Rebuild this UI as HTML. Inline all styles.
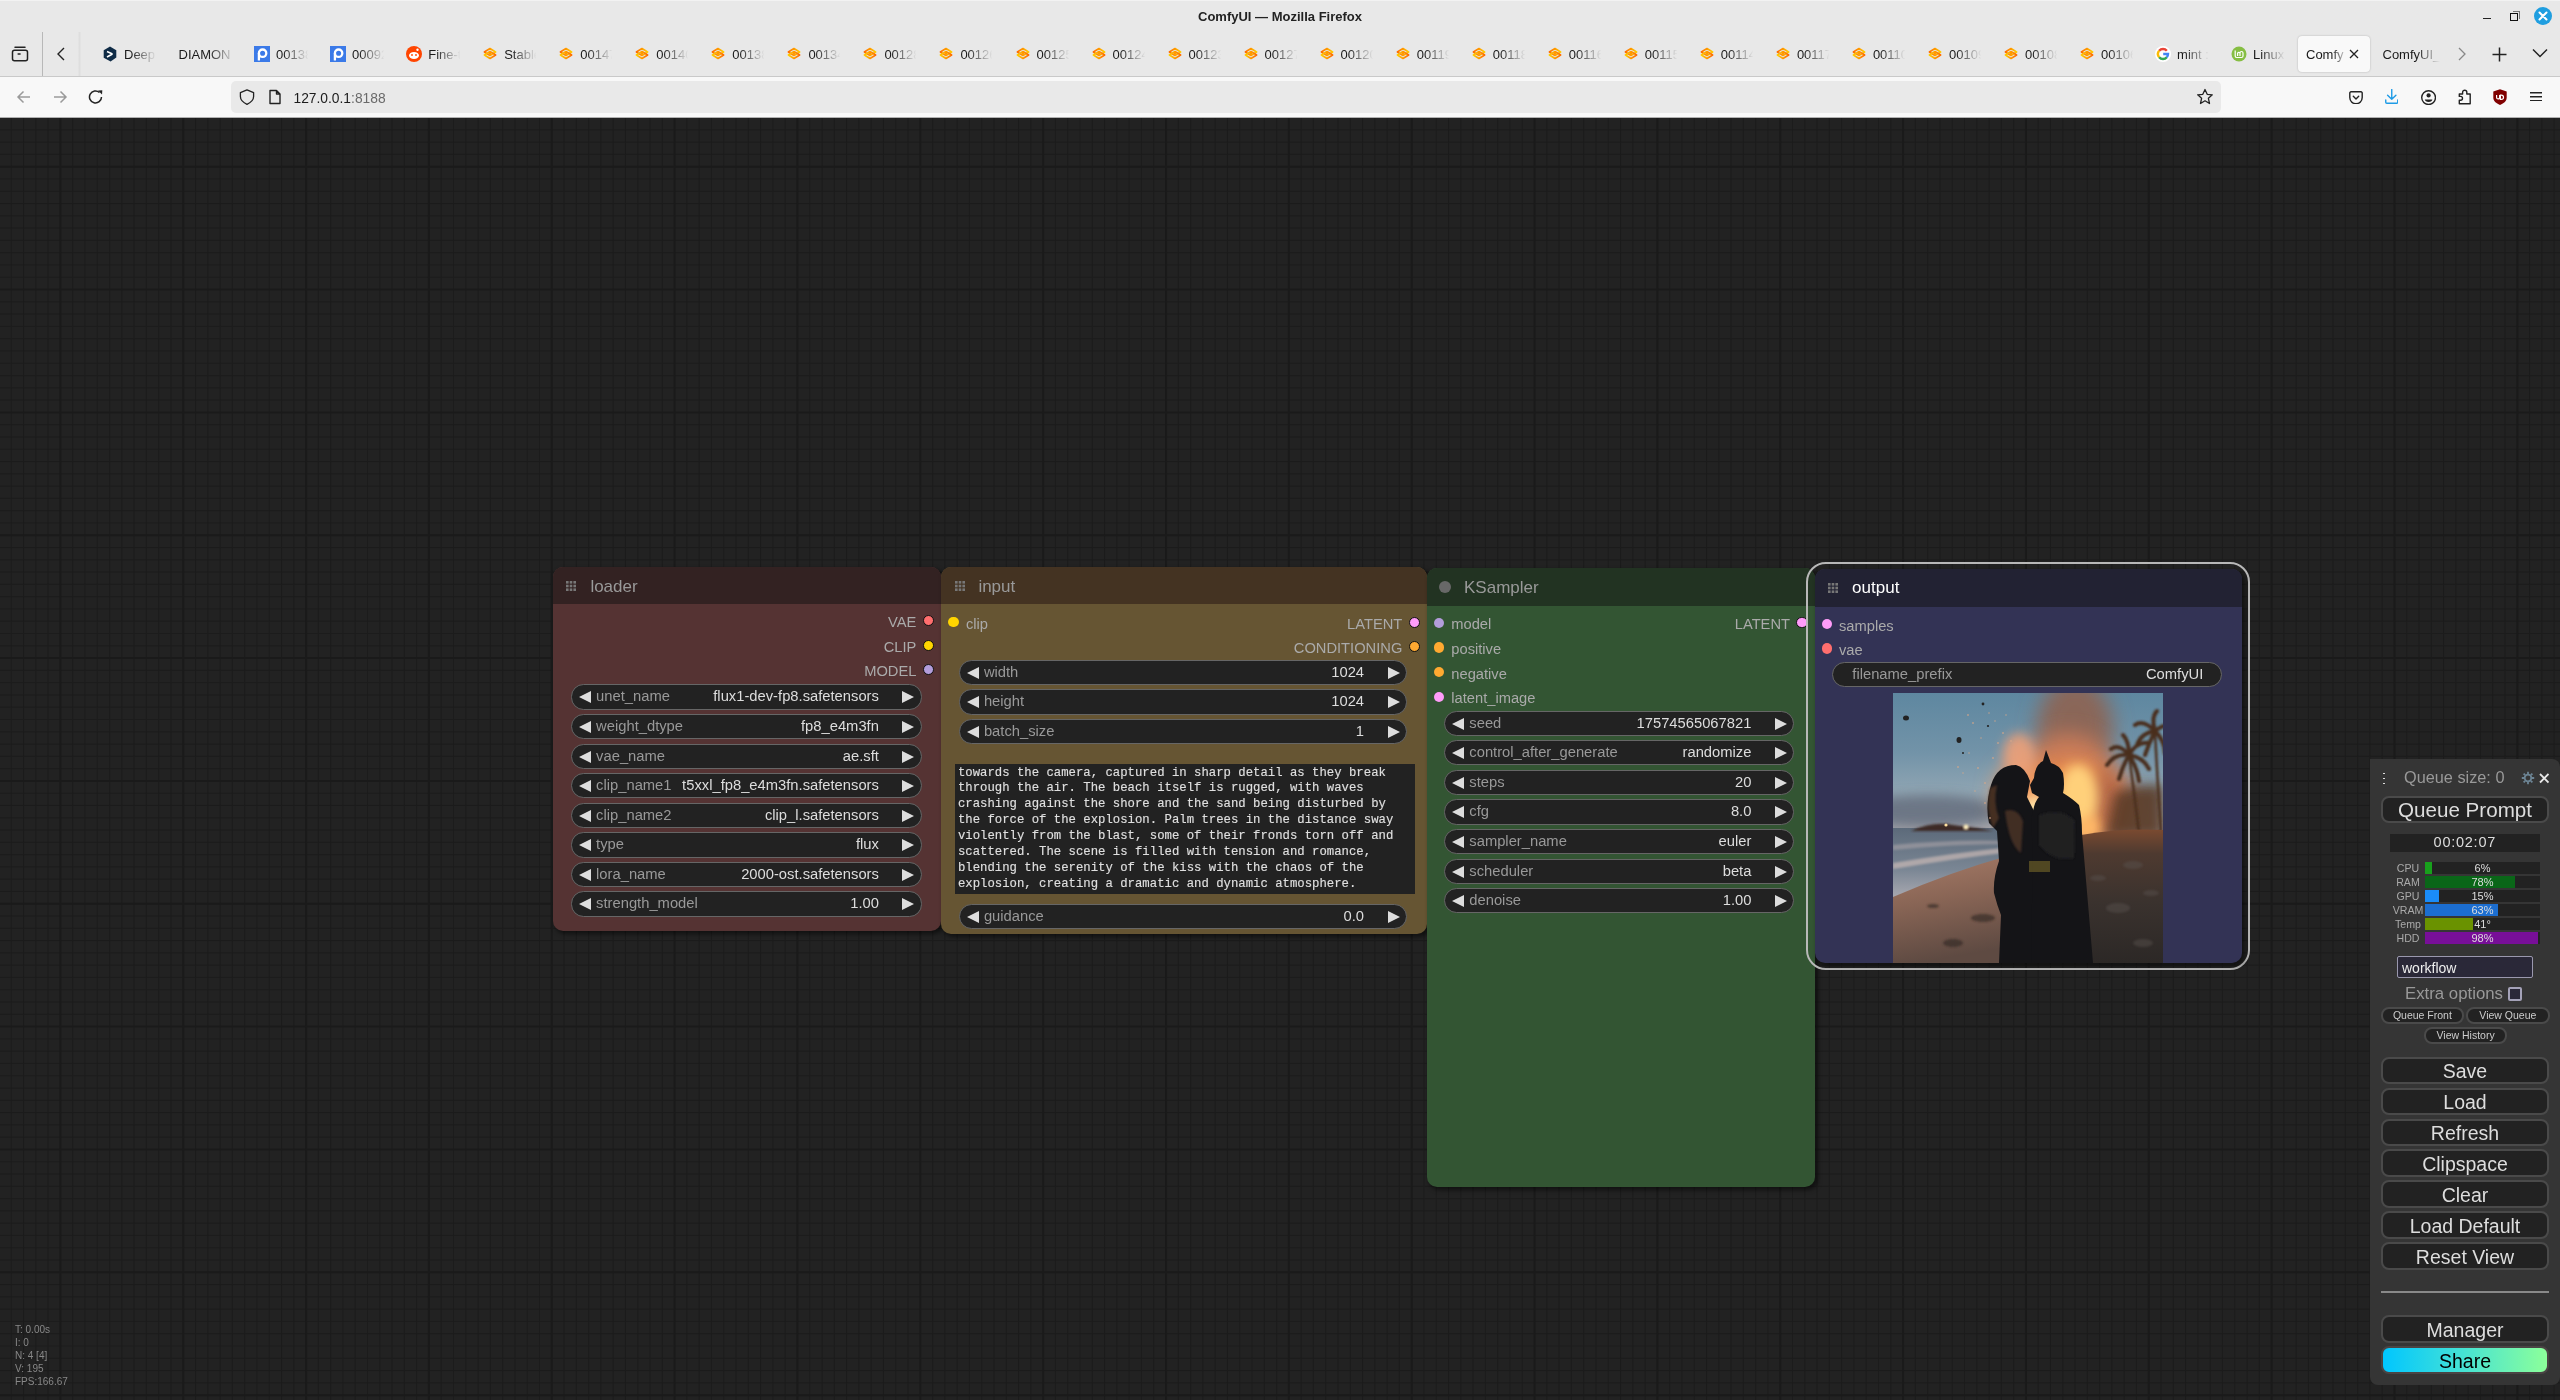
<!DOCTYPE html><html><head><meta charset="utf-8"><title>ComfyUI</title><style>
*{box-sizing:border-box;margin:0;padding:0}
html,body{width:2560px;height:1400px;overflow:hidden;background:#222;font-family:"Liberation Sans",sans-serif}
.abs{position:absolute}
#chrome{position:absolute;left:0;top:0;width:2560px;height:118px;background:#e8e8e8}
#nav{position:absolute;left:0;top:77px;width:2560px;height:41px;background:#f8f8f8}
#canvas{position:absolute;left:0;top:118px;width:2560px;height:1282px;background:#222}
.tab{position:absolute;top:36px;height:36px;width:76px}
.tabtxt{position:absolute;top:0;height:36px;line-height:36px;font-size:13px;color:#1a1a1a;white-space:nowrap;overflow:hidden;padding-top:0.5px;
 -webkit-mask-image:linear-gradient(90deg,#000 0,#000 20%,transparent 90%)}
.node{position:absolute;border-radius:10px;overflow:visible}
.ntitle{position:absolute;left:0;top:0;right:0;border-radius:9px 9px 0 0}
.ntext{position:absolute;font-size:16px;color:#999;white-space:nowrap}
.slot{position:absolute;width:10px;height:10px;border-radius:50%}
.slabel{position:absolute;font-size:14.5px;color:#aaa;white-space:nowrap;line-height:16px}
.w{position:absolute;height:25.4px;background:#222;border:1px solid #666;border-radius:12.5px}
.wl{position:absolute;left:25px;top:0;line-height:23.4px;font-size:14.75px;color:#999;white-space:nowrap}
.wv{position:absolute;right:43px;top:0;line-height:23.4px;font-size:14.75px;color:#ddd;white-space:nowrap;text-align:right}
.tri{position:absolute;top:6.1px;width:0;height:0;border-top:6.25px solid transparent;border-bottom:6.25px solid transparent}
.tl{left:7px;border-right:12.5px solid #ddd}
.tr{right:6.5px;border-left:12.5px solid #ddd}
.btn{position:absolute;left:2381px;width:169px;height:27.5px;background:#222;border:2px solid #4a4a4a;border-radius:8px;color:#ddd;font-size:19.5px;text-align:center;line-height:23px}
.sbtn{position:absolute;height:17px;background:#222;border:2px solid #4a4a4a;border-radius:8px;color:#ccc;font-size:10.5px;text-align:center;line-height:13px}
.rl{position:absolute;left:2386px;width:44px;text-align:center;font-size:10.6px;color:#aaa;line-height:12px}
.bar{position:absolute;left:2425px;width:115px;height:12px;background:#222}
.fill{position:absolute;left:0;top:0;height:12px}
.bt{position:absolute;left:0;top:0;width:115px;text-align:center;font-size:11px;line-height:12px;color:#ddd}
.stat{position:absolute;left:15px;font-size:10px;color:#888;line-height:13px}
</style></head><body><div id="root" style="position:absolute;left:0;top:0;width:2560px;height:1400px;will-change:transform">
<svg width="0" height="0" style="position:absolute"><defs><linearGradient id="sg1" x1="0" x2="1" y1="0" y2="0"><stop offset="0" stop-color="#ff6a00"/><stop offset="1" stop-color="#ffcc00"/></linearGradient><linearGradient id="sg2" x1="0" x2="1" y1="0" y2="0"><stop offset="0" stop-color="#ffcc00"/><stop offset="1" stop-color="#ff6a00"/></linearGradient></defs></svg>
<div id="chrome"></div>
<div class="abs" style="left:0;top:0;width:2560px;height:1px;background:#f2f2f2"></div>
<div class="abs" style="left:0;top:7px;width:2560px;text-align:center;font-size:13px;font-weight:bold;color:#222;line-height:20px">ComfyUI — Mozilla Firefox</div>
<div class="abs" style="left:2483px;top:17.8px;width:8px;height:1.4px;background:#222"></div>
<div class="abs" style="left:2512.5px;top:11.2px;width:7.5px;height:7.5px;border-top:1.5px solid #777;border-right:1.5px solid #777"></div>
<div class="abs" style="left:2510px;top:13.3px;width:8px;height:8px;border:1.6px solid #111;background:#e8e8e8"></div>
<div class="abs" style="left:2533.8px;top:6.8px;width:18.2px;height:18.2px;border-radius:50%;background:#1f9ee0"></div>
<svg class="abs" style="left:2537px;top:10px" width="12" height="12" viewBox="0 0 12 12"><path d="M2.5 2.5L9.5 9.5M9.5 2.5L2.5 9.5" stroke="#fff" stroke-width="2" stroke-linecap="round"/></svg>
<svg class="abs" style="left:11px;top:45px" width="18" height="18" viewBox="0 0 18 18"><rect x="1.5" y="5.3" width="15" height="10.5" rx="2" fill="none" stroke="#222" stroke-width="1.5"/><path d="M4 2.3h10" stroke="#222" stroke-width="1.5" stroke-linecap="round"/><path d="M6.6 9h3" stroke="#222" stroke-width="1.5"/></svg>
<div class="abs" style="left:42px;top:32px;width:1px;height:44px;background:#b8b8b8"></div>
<svg class="abs" style="left:55px;top:47px" width="12" height="14" viewBox="0 0 12 14"><path d="M9 1L3 7L9 13" fill="none" stroke="#222" stroke-width="1.4"/></svg>
<div class="abs" style="left:77.5px;top:32px;width:3px;height:44px;background:linear-gradient(90deg,#e6e6e6,#dedede,#e6e6e6)"></div>
<svg class="abs" style="left:102.0px;top:46px" width="16" height="16" viewBox="0 0 16 16"><path d="M8 0.5L14.3 4.2V11.5L8.6 15.5L1.7 11.8V4.2Z" fill="#0f2b46"/><path d="M5 5.5L10.5 8M5 11L10.5 8" stroke="#fff" stroke-width="1.6"/></svg>
<div class="tabtxt" style="left:124.0px;top:36px;width:36px">Deep</div>
<div class="tabtxt" style="left:178.5px;top:36px;width:58px;-webkit-mask-image:linear-gradient(90deg,#000 0,#000 50%,transparent 98%)">DIAMON</div>
<svg class="abs" style="left:254.10000000000002px;top:46px" width="16" height="16" viewBox="0 0 16 16"><rect x="0" y="0" width="16" height="16" fill="#3b7ae8"/><circle cx="8.6" cy="7.2" r="3.7" fill="none" stroke="#fff" stroke-width="2.3"/><path d="M4.9 7.2V14.5" stroke="#fff" stroke-width="2.3"/><circle cx="8.6" cy="7.2" r="1.2" fill="#3b7ae8"/></svg>
<div class="tabtxt" style="left:276.1px;top:36px;width:36px">00138</div>
<svg class="abs" style="left:330.1px;top:46px" width="16" height="16" viewBox="0 0 16 16"><rect x="0" y="0" width="16" height="16" fill="#3b7ae8"/><circle cx="8.6" cy="7.2" r="3.7" fill="none" stroke="#fff" stroke-width="2.3"/><path d="M4.9 7.2V14.5" stroke="#fff" stroke-width="2.3"/><circle cx="8.6" cy="7.2" r="1.2" fill="#3b7ae8"/></svg>
<div class="tabtxt" style="left:352.1px;top:36px;width:36px">00092</div>
<svg class="abs" style="left:406.2px;top:46px" width="16" height="16" viewBox="0 0 16 16"><circle cx="8" cy="8" r="8" fill="#ff4500"/><ellipse cx="8" cy="9.5" rx="5" ry="3.5" fill="#fff"/><circle cx="6" cy="9" r="0.9" fill="#ff4500"/><circle cx="10" cy="9" r="0.9" fill="#ff4500"/><circle cx="11.5" cy="3.8" r="1.2" fill="#fff"/></svg>
<div class="tabtxt" style="left:428.2px;top:36px;width:36px">Fine-t</div>
<svg class="abs" style="left:482.2px;top:46px" width="16" height="16" viewBox="0 0 16 16"><g transform="translate(8 7.6) scale(0.88) translate(-8 -8)"><path d="M1.6 6.2L8 2.2L14.4 6.2L8 10.2Z" fill="none" stroke="url(#sg1)" stroke-width="1.8" stroke-linejoin="round"/><path d="M1.6 9.6L8 5.6L14.4 9.6L8 13.6Z" fill="none" stroke="url(#sg2)" stroke-width="1.8" stroke-linejoin="round"/><circle cx="8" cy="7.9" r="1.5" fill="#ff9a00"/></g></svg>
<div class="tabtxt" style="left:504.2px;top:36px;width:36px">Stable</div>
<svg class="abs" style="left:558.2px;top:46px" width="16" height="16" viewBox="0 0 16 16"><g transform="translate(8 7.6) scale(0.88) translate(-8 -8)"><path d="M1.6 6.2L8 2.2L14.4 6.2L8 10.2Z" fill="none" stroke="url(#sg1)" stroke-width="1.8" stroke-linejoin="round"/><path d="M1.6 9.6L8 5.6L14.4 9.6L8 13.6Z" fill="none" stroke="url(#sg2)" stroke-width="1.8" stroke-linejoin="round"/><circle cx="8" cy="7.9" r="1.5" fill="#ff9a00"/></g></svg>
<div class="tabtxt" style="left:580.2px;top:36px;width:36px">00147</div>
<svg class="abs" style="left:634.3px;top:46px" width="16" height="16" viewBox="0 0 16 16"><g transform="translate(8 7.6) scale(0.88) translate(-8 -8)"><path d="M1.6 6.2L8 2.2L14.4 6.2L8 10.2Z" fill="none" stroke="url(#sg1)" stroke-width="1.8" stroke-linejoin="round"/><path d="M1.6 9.6L8 5.6L14.4 9.6L8 13.6Z" fill="none" stroke="url(#sg2)" stroke-width="1.8" stroke-linejoin="round"/><circle cx="8" cy="7.9" r="1.5" fill="#ff9a00"/></g></svg>
<div class="tabtxt" style="left:656.3px;top:36px;width:36px">00140</div>
<svg class="abs" style="left:710.3px;top:46px" width="16" height="16" viewBox="0 0 16 16"><g transform="translate(8 7.6) scale(0.88) translate(-8 -8)"><path d="M1.6 6.2L8 2.2L14.4 6.2L8 10.2Z" fill="none" stroke="url(#sg1)" stroke-width="1.8" stroke-linejoin="round"/><path d="M1.6 9.6L8 5.6L14.4 9.6L8 13.6Z" fill="none" stroke="url(#sg2)" stroke-width="1.8" stroke-linejoin="round"/><circle cx="8" cy="7.9" r="1.5" fill="#ff9a00"/></g></svg>
<div class="tabtxt" style="left:732.3px;top:36px;width:36px">00138</div>
<svg class="abs" style="left:786.4px;top:46px" width="16" height="16" viewBox="0 0 16 16"><g transform="translate(8 7.6) scale(0.88) translate(-8 -8)"><path d="M1.6 6.2L8 2.2L14.4 6.2L8 10.2Z" fill="none" stroke="url(#sg1)" stroke-width="1.8" stroke-linejoin="round"/><path d="M1.6 9.6L8 5.6L14.4 9.6L8 13.6Z" fill="none" stroke="url(#sg2)" stroke-width="1.8" stroke-linejoin="round"/><circle cx="8" cy="7.9" r="1.5" fill="#ff9a00"/></g></svg>
<div class="tabtxt" style="left:808.4px;top:36px;width:36px">00134</div>
<svg class="abs" style="left:862.4px;top:46px" width="16" height="16" viewBox="0 0 16 16"><g transform="translate(8 7.6) scale(0.88) translate(-8 -8)"><path d="M1.6 6.2L8 2.2L14.4 6.2L8 10.2Z" fill="none" stroke="url(#sg1)" stroke-width="1.8" stroke-linejoin="round"/><path d="M1.6 9.6L8 5.6L14.4 9.6L8 13.6Z" fill="none" stroke="url(#sg2)" stroke-width="1.8" stroke-linejoin="round"/><circle cx="8" cy="7.9" r="1.5" fill="#ff9a00"/></g></svg>
<div class="tabtxt" style="left:884.4px;top:36px;width:36px">00128</div>
<svg class="abs" style="left:938.4px;top:46px" width="16" height="16" viewBox="0 0 16 16"><g transform="translate(8 7.6) scale(0.88) translate(-8 -8)"><path d="M1.6 6.2L8 2.2L14.4 6.2L8 10.2Z" fill="none" stroke="url(#sg1)" stroke-width="1.8" stroke-linejoin="round"/><path d="M1.6 9.6L8 5.6L14.4 9.6L8 13.6Z" fill="none" stroke="url(#sg2)" stroke-width="1.8" stroke-linejoin="round"/><circle cx="8" cy="7.9" r="1.5" fill="#ff9a00"/></g></svg>
<div class="tabtxt" style="left:960.4px;top:36px;width:36px">00126</div>
<svg class="abs" style="left:1014.5px;top:46px" width="16" height="16" viewBox="0 0 16 16"><g transform="translate(8 7.6) scale(0.88) translate(-8 -8)"><path d="M1.6 6.2L8 2.2L14.4 6.2L8 10.2Z" fill="none" stroke="url(#sg1)" stroke-width="1.8" stroke-linejoin="round"/><path d="M1.6 9.6L8 5.6L14.4 9.6L8 13.6Z" fill="none" stroke="url(#sg2)" stroke-width="1.8" stroke-linejoin="round"/><circle cx="8" cy="7.9" r="1.5" fill="#ff9a00"/></g></svg>
<div class="tabtxt" style="left:1036.5px;top:36px;width:36px">00125</div>
<svg class="abs" style="left:1090.5px;top:46px" width="16" height="16" viewBox="0 0 16 16"><g transform="translate(8 7.6) scale(0.88) translate(-8 -8)"><path d="M1.6 6.2L8 2.2L14.4 6.2L8 10.2Z" fill="none" stroke="url(#sg1)" stroke-width="1.8" stroke-linejoin="round"/><path d="M1.6 9.6L8 5.6L14.4 9.6L8 13.6Z" fill="none" stroke="url(#sg2)" stroke-width="1.8" stroke-linejoin="round"/><circle cx="8" cy="7.9" r="1.5" fill="#ff9a00"/></g></svg>
<div class="tabtxt" style="left:1112.5px;top:36px;width:36px">00124</div>
<svg class="abs" style="left:1166.6px;top:46px" width="16" height="16" viewBox="0 0 16 16"><g transform="translate(8 7.6) scale(0.88) translate(-8 -8)"><path d="M1.6 6.2L8 2.2L14.4 6.2L8 10.2Z" fill="none" stroke="url(#sg1)" stroke-width="1.8" stroke-linejoin="round"/><path d="M1.6 9.6L8 5.6L14.4 9.6L8 13.6Z" fill="none" stroke="url(#sg2)" stroke-width="1.8" stroke-linejoin="round"/><circle cx="8" cy="7.9" r="1.5" fill="#ff9a00"/></g></svg>
<div class="tabtxt" style="left:1188.6px;top:36px;width:36px">00123</div>
<svg class="abs" style="left:1242.6px;top:46px" width="16" height="16" viewBox="0 0 16 16"><g transform="translate(8 7.6) scale(0.88) translate(-8 -8)"><path d="M1.6 6.2L8 2.2L14.4 6.2L8 10.2Z" fill="none" stroke="url(#sg1)" stroke-width="1.8" stroke-linejoin="round"/><path d="M1.6 9.6L8 5.6L14.4 9.6L8 13.6Z" fill="none" stroke="url(#sg2)" stroke-width="1.8" stroke-linejoin="round"/><circle cx="8" cy="7.9" r="1.5" fill="#ff9a00"/></g></svg>
<div class="tabtxt" style="left:1264.6px;top:36px;width:36px">00127</div>
<svg class="abs" style="left:1318.6px;top:46px" width="16" height="16" viewBox="0 0 16 16"><g transform="translate(8 7.6) scale(0.88) translate(-8 -8)"><path d="M1.6 6.2L8 2.2L14.4 6.2L8 10.2Z" fill="none" stroke="url(#sg1)" stroke-width="1.8" stroke-linejoin="round"/><path d="M1.6 9.6L8 5.6L14.4 9.6L8 13.6Z" fill="none" stroke="url(#sg2)" stroke-width="1.8" stroke-linejoin="round"/><circle cx="8" cy="7.9" r="1.5" fill="#ff9a00"/></g></svg>
<div class="tabtxt" style="left:1340.6px;top:36px;width:36px">00120</div>
<svg class="abs" style="left:1394.7px;top:46px" width="16" height="16" viewBox="0 0 16 16"><g transform="translate(8 7.6) scale(0.88) translate(-8 -8)"><path d="M1.6 6.2L8 2.2L14.4 6.2L8 10.2Z" fill="none" stroke="url(#sg1)" stroke-width="1.8" stroke-linejoin="round"/><path d="M1.6 9.6L8 5.6L14.4 9.6L8 13.6Z" fill="none" stroke="url(#sg2)" stroke-width="1.8" stroke-linejoin="round"/><circle cx="8" cy="7.9" r="1.5" fill="#ff9a00"/></g></svg>
<div class="tabtxt" style="left:1416.7px;top:36px;width:36px">00119</div>
<svg class="abs" style="left:1470.7px;top:46px" width="16" height="16" viewBox="0 0 16 16"><g transform="translate(8 7.6) scale(0.88) translate(-8 -8)"><path d="M1.6 6.2L8 2.2L14.4 6.2L8 10.2Z" fill="none" stroke="url(#sg1)" stroke-width="1.8" stroke-linejoin="round"/><path d="M1.6 9.6L8 5.6L14.4 9.6L8 13.6Z" fill="none" stroke="url(#sg2)" stroke-width="1.8" stroke-linejoin="round"/><circle cx="8" cy="7.9" r="1.5" fill="#ff9a00"/></g></svg>
<div class="tabtxt" style="left:1492.7px;top:36px;width:36px">00118</div>
<svg class="abs" style="left:1546.8px;top:46px" width="16" height="16" viewBox="0 0 16 16"><g transform="translate(8 7.6) scale(0.88) translate(-8 -8)"><path d="M1.6 6.2L8 2.2L14.4 6.2L8 10.2Z" fill="none" stroke="url(#sg1)" stroke-width="1.8" stroke-linejoin="round"/><path d="M1.6 9.6L8 5.6L14.4 9.6L8 13.6Z" fill="none" stroke="url(#sg2)" stroke-width="1.8" stroke-linejoin="round"/><circle cx="8" cy="7.9" r="1.5" fill="#ff9a00"/></g></svg>
<div class="tabtxt" style="left:1568.8px;top:36px;width:36px">00116</div>
<svg class="abs" style="left:1622.8px;top:46px" width="16" height="16" viewBox="0 0 16 16"><g transform="translate(8 7.6) scale(0.88) translate(-8 -8)"><path d="M1.6 6.2L8 2.2L14.4 6.2L8 10.2Z" fill="none" stroke="url(#sg1)" stroke-width="1.8" stroke-linejoin="round"/><path d="M1.6 9.6L8 5.6L14.4 9.6L8 13.6Z" fill="none" stroke="url(#sg2)" stroke-width="1.8" stroke-linejoin="round"/><circle cx="8" cy="7.9" r="1.5" fill="#ff9a00"/></g></svg>
<div class="tabtxt" style="left:1644.8px;top:36px;width:36px">00115</div>
<svg class="abs" style="left:1698.8px;top:46px" width="16" height="16" viewBox="0 0 16 16"><g transform="translate(8 7.6) scale(0.88) translate(-8 -8)"><path d="M1.6 6.2L8 2.2L14.4 6.2L8 10.2Z" fill="none" stroke="url(#sg1)" stroke-width="1.8" stroke-linejoin="round"/><path d="M1.6 9.6L8 5.6L14.4 9.6L8 13.6Z" fill="none" stroke="url(#sg2)" stroke-width="1.8" stroke-linejoin="round"/><circle cx="8" cy="7.9" r="1.5" fill="#ff9a00"/></g></svg>
<div class="tabtxt" style="left:1720.8px;top:36px;width:36px">00114</div>
<svg class="abs" style="left:1774.9px;top:46px" width="16" height="16" viewBox="0 0 16 16"><g transform="translate(8 7.6) scale(0.88) translate(-8 -8)"><path d="M1.6 6.2L8 2.2L14.4 6.2L8 10.2Z" fill="none" stroke="url(#sg1)" stroke-width="1.8" stroke-linejoin="round"/><path d="M1.6 9.6L8 5.6L14.4 9.6L8 13.6Z" fill="none" stroke="url(#sg2)" stroke-width="1.8" stroke-linejoin="round"/><circle cx="8" cy="7.9" r="1.5" fill="#ff9a00"/></g></svg>
<div class="tabtxt" style="left:1796.9px;top:36px;width:36px">00117</div>
<svg class="abs" style="left:1850.9px;top:46px" width="16" height="16" viewBox="0 0 16 16"><g transform="translate(8 7.6) scale(0.88) translate(-8 -8)"><path d="M1.6 6.2L8 2.2L14.4 6.2L8 10.2Z" fill="none" stroke="url(#sg1)" stroke-width="1.8" stroke-linejoin="round"/><path d="M1.6 9.6L8 5.6L14.4 9.6L8 13.6Z" fill="none" stroke="url(#sg2)" stroke-width="1.8" stroke-linejoin="round"/><circle cx="8" cy="7.9" r="1.5" fill="#ff9a00"/></g></svg>
<div class="tabtxt" style="left:1872.9px;top:36px;width:36px">00110</div>
<svg class="abs" style="left:1927.0px;top:46px" width="16" height="16" viewBox="0 0 16 16"><g transform="translate(8 7.6) scale(0.88) translate(-8 -8)"><path d="M1.6 6.2L8 2.2L14.4 6.2L8 10.2Z" fill="none" stroke="url(#sg1)" stroke-width="1.8" stroke-linejoin="round"/><path d="M1.6 9.6L8 5.6L14.4 9.6L8 13.6Z" fill="none" stroke="url(#sg2)" stroke-width="1.8" stroke-linejoin="round"/><circle cx="8" cy="7.9" r="1.5" fill="#ff9a00"/></g></svg>
<div class="tabtxt" style="left:1949.0px;top:36px;width:36px">00109</div>
<svg class="abs" style="left:2003.0px;top:46px" width="16" height="16" viewBox="0 0 16 16"><g transform="translate(8 7.6) scale(0.88) translate(-8 -8)"><path d="M1.6 6.2L8 2.2L14.4 6.2L8 10.2Z" fill="none" stroke="url(#sg1)" stroke-width="1.8" stroke-linejoin="round"/><path d="M1.6 9.6L8 5.6L14.4 9.6L8 13.6Z" fill="none" stroke="url(#sg2)" stroke-width="1.8" stroke-linejoin="round"/><circle cx="8" cy="7.9" r="1.5" fill="#ff9a00"/></g></svg>
<div class="tabtxt" style="left:2025.0px;top:36px;width:36px">00108</div>
<svg class="abs" style="left:2079.0px;top:46px" width="16" height="16" viewBox="0 0 16 16"><g transform="translate(8 7.6) scale(0.88) translate(-8 -8)"><path d="M1.6 6.2L8 2.2L14.4 6.2L8 10.2Z" fill="none" stroke="url(#sg1)" stroke-width="1.8" stroke-linejoin="round"/><path d="M1.6 9.6L8 5.6L14.4 9.6L8 13.6Z" fill="none" stroke="url(#sg2)" stroke-width="1.8" stroke-linejoin="round"/><circle cx="8" cy="7.9" r="1.5" fill="#ff9a00"/></g></svg>
<div class="tabtxt" style="left:2101.0px;top:36px;width:36px">00106</div>
<svg class="abs" style="left:2155.1px;top:46px" width="16" height="16" viewBox="0 0 16 16"><circle cx="8" cy="8" r="8" fill="#fff"/><g fill="none" stroke-width="2.4"><path d="M11.83 4.79A5 5 0 0 0 4.17 4.79" stroke="#ea4335"/><path d="M4.17 4.79A5 5 0 0 0 4.17 11.21" stroke="#fbbc05"/><path d="M4.17 11.21A5 5 0 0 0 11.83 11.21" stroke="#34a853"/><path d="M11.83 11.21A5 5 0 0 0 13 8H8.2" stroke="#4285f4"/></g></svg>
<div class="tabtxt" style="left:2177.1px;top:36px;width:36px">mint :</div>
<svg class="abs" style="left:2231.1px;top:46px" width="16" height="16" viewBox="0 0 16 16"><circle cx="8" cy="8" r="7.5" fill="#86be43"/><path d="M4.2 4.5V10A1.5 1.5 0 0 0 5.7 11.5H10.5A1.5 1.5 0 0 0 12 10V7A1.5 1.5 0 0 0 9 7V10M9 7A1.5 1.5 0 0 0 6.6 7V10" fill="none" stroke="#fff" stroke-width="1.2"/></svg>
<div class="tabtxt" style="left:2253.1px;top:36px;width:36px">Linux</div>
<div class="abs" style="left:2298px;top:36px;width:72px;height:36px;background:#f9f9f9;border-radius:4px;box-shadow:0 0 2px rgba(0,0,0,.25)"></div>
<div class="tabtxt" style="left:2306px;top:36px;width:42px;-webkit-mask-image:linear-gradient(90deg,#000 0,#000 62%,transparent 100%)">Comfy</div>
<svg class="abs" style="left:2348px;top:48px" width="12" height="12" viewBox="0 0 12 12"><path d="M2 2L10 10M10 2L2 10" stroke="#222" stroke-width="1.3"/></svg>
<div class="tabtxt" style="left:2382.5px;top:36px;width:58px;-webkit-mask-image:linear-gradient(90deg,#000 0,#000 58%,transparent 98%)">ComfyUI_</div>
<svg class="abs" style="left:2456px;top:47px" width="12" height="14" viewBox="0 0 12 14"><path d="M3 1L9 7L3 13" fill="none" stroke="#888" stroke-width="1.3"/></svg>
<svg class="abs" style="left:2492px;top:47px" width="15" height="15" viewBox="0 0 15 15"><path d="M7.5 0.5V14.5M0.5 7.5H14.5" stroke="#222" stroke-width="1.5"/></svg>
<svg class="abs" style="left:2532px;top:48px" width="16" height="10" viewBox="0 0 16 10"><path d="M1 1.5L8 8.5L15 1.5" fill="none" stroke="#222" stroke-width="1.5"/></svg>
<div class="abs" style="left:0;top:76px;width:2560px;height:1px;background:#c9c9c9"></div>
<div id="nav"></div>
<div class="abs" style="left:0;top:117px;width:2560px;height:1px;background:#b0b0b0"></div>
<svg class="abs" style="left:16px;top:89px" width="16" height="16" viewBox="0 0 16 16"><path d="M14 8H2.5M7.5 2.5L2 8L7.5 13.5" fill="none" stroke="#9a9a9a" stroke-width="1.5"/></svg>
<svg class="abs" style="left:52px;top:89px" width="16" height="16" viewBox="0 0 16 16"><path d="M2 8H13.5M8.5 2.5L14 8L8.5 13.5" fill="none" stroke="#9a9a9a" stroke-width="1.5"/></svg>
<svg class="abs" style="left:88px;top:89px" width="16" height="16" viewBox="0 0 16 16"><path d="M13.5 8A6 6 0 1 1 11.5 3.5" fill="none" stroke="#222" stroke-width="1.5"/><path d="M10 1.5L14.3 1.2L14 5.5Z" fill="#222"/></svg>
<div class="abs" style="left:231px;top:81px;width:1990px;height:32px;background:#e9e9e9;border-radius:5px"></div>
<svg class="abs" style="left:239px;top:88.5px" width="16" height="16" viewBox="0 0 16 16"><path d="M8 0.9L14.6 3.6V7.5C14.6 11 11.5 13.6 8 15.3C4.5 13.6 1.4 11 1.4 7.5V3.6Z" fill="none" stroke="#222" stroke-width="1.3" stroke-linejoin="round"/></svg>
<svg class="abs" style="left:267px;top:89px" width="16" height="16" viewBox="0 0 16 16"><path d="M3 1.5H9.5L13 5V14.5H3Z M9.5 1.5V5H13" fill="none" stroke="#222" stroke-width="1.4" stroke-linejoin="round"/></svg>
<div class="abs" style="left:293.5px;top:88.8px;line-height:20px;font-size:13.8px;color:#1c1c1c;white-space:nowrap">127.0.0.1<span style="color:#6a6a6a">:8188</span></div>
<svg class="abs" style="left:2196px;top:88px" width="18" height="18" viewBox="0 0 18 18"><path d="M9 1.5L11.2 6.3L16.3 6.8L12.4 10.3L13.5 15.5L9 12.8L4.5 15.5L5.6 10.3L1.7 6.8L6.8 6.3Z" fill="none" stroke="#222" stroke-width="1.3" stroke-linejoin="round"/></svg>
<svg class="abs" style="left:2349px;top:90.5px" width="14" height="13.5" viewBox="0 0 14 13.5"><path d="M2 0.8H12A1.2 1.2 0 0 1 13.2 2V6.5A6.2 6.2 0 0 1 0.8 6.5V2A1.2 1.2 0 0 1 2 0.8Z" fill="none" stroke="#222" stroke-width="1.4"/><path d="M4.3 5.2L7 7.9L9.7 5.2" fill="none" stroke="#222" stroke-width="1.4" stroke-linecap="round" stroke-linejoin="round"/></svg>
<svg class="abs" style="left:2384.8px;top:89px" width="13.5" height="15" viewBox="0 0 13.5 15"><path d="M6.75 0.5V10.2M2.6 6.2L6.75 10.3L10.9 6.2" fill="none" stroke="#1e9be6" stroke-width="1.4" stroke-linecap="round" stroke-linejoin="round"/><path d="M0.75 11V13.2A1 1 0 0 0 1.75 14.2H11.75A1 1 0 0 0 12.75 13.2V11" fill="none" stroke="#1e9be6" stroke-width="1.4" stroke-linecap="round"/></svg>
<svg class="abs" style="left:2420.8px;top:89.9px" width="15.2" height="15.2" viewBox="0 0 15.2 15.2"><circle cx="7.6" cy="7.6" r="6.9" fill="none" stroke="#222" stroke-width="1.4"/><circle cx="7.6" cy="5.4" r="2.1" fill="#222"/><path d="M3.8 9.6H11.4Q11 12 7.6 12Q4.2 12 3.8 9.6Z" fill="#222"/></svg>
<svg class="abs" style="left:2457.5px;top:89px" width="14" height="16" viewBox="0 0 14 16"><path d="M1.3 5H4.6V3.3A2.1 2.1 0 0 1 8.8 3.3V5H12.2V14.8H1.3V11.2H2.6A1.9 1.9 0 0 0 2.6 7.4H1.3Z" fill="none" stroke="#222" stroke-width="1.4" stroke-linejoin="round"/></svg>
<svg class="abs" style="left:2493px;top:89px" width="14" height="16" viewBox="0 0 14 16"><path d="M7 0.3L13.7 2.5V8.6C13.7 12 11 14.5 7 15.9C3 14.5 0.3 12 0.3 8.6V2.5Z" fill="#800000"/><path d="M3.6 6V8.4A1.5 1.5 0 0 0 6.6 8.4V6M7.4 6.2H8.4A2.1 2.1 0 0 1 8.4 10.4H7.4Z" fill="none" stroke="#fff" stroke-width="1.2"/></svg>
<svg class="abs" style="left:2529.8px;top:91.8px" width="12.4" height="9.6" viewBox="0 0 12.4 9.6"><path d="M0 0.8H12.4M0 4.8H12.4M0 8.8H12.4" stroke="#222" stroke-width="1.4"/></svg>
<div id="canvas"></div>
<svg class="abs" style="left:0;top:118px" width="2560" height="1282" viewBox="0 0 2560 1282"><path d="M-1.02 0V1282M11.26 0V1282M23.55 0V1282M35.83 0V1282M48.12 0V1282M72.68 0V1282M84.97 0V1282M97.25 0V1282M109.54 0V1282M121.82 0V1282M134.11 0V1282M146.39 0V1282M158.68 0V1282M170.96 0V1282M195.53 0V1282M207.81 0V1282M220.10 0V1282M232.38 0V1282M244.67 0V1282M256.95 0V1282M269.24 0V1282M281.52 0V1282M293.81 0V1282M318.37 0V1282M330.66 0V1282M342.94 0V1282M355.23 0V1282M367.51 0V1282M379.80 0V1282M392.08 0V1282M404.37 0V1282M416.65 0V1282M441.22 0V1282M453.50 0V1282M465.79 0V1282M478.07 0V1282M490.36 0V1282M502.64 0V1282M514.93 0V1282M527.21 0V1282M539.50 0V1282M564.06 0V1282M576.35 0V1282M588.63 0V1282M600.92 0V1282M613.20 0V1282M625.49 0V1282M637.77 0V1282M650.06 0V1282M662.34 0V1282M686.91 0V1282M699.19 0V1282M711.48 0V1282M723.76 0V1282M736.05 0V1282M748.33 0V1282M760.62 0V1282M772.90 0V1282M785.19 0V1282M809.75 0V1282M822.04 0V1282M834.32 0V1282M846.61 0V1282M858.89 0V1282M871.18 0V1282M883.46 0V1282M895.75 0V1282M908.03 0V1282M932.60 0V1282M944.88 0V1282M957.17 0V1282M969.45 0V1282M981.74 0V1282M994.02 0V1282M1006.31 0V1282M1018.59 0V1282M1030.88 0V1282M1055.44 0V1282M1067.73 0V1282M1080.01 0V1282M1092.30 0V1282M1104.58 0V1282M1116.87 0V1282M1129.15 0V1282M1141.44 0V1282M1153.72 0V1282M1178.29 0V1282M1190.57 0V1282M1202.86 0V1282M1215.14 0V1282M1227.43 0V1282M1239.71 0V1282M1252.00 0V1282M1264.28 0V1282M1276.57 0V1282M1301.13 0V1282M1313.42 0V1282M1325.70 0V1282M1337.99 0V1282M1350.27 0V1282M1362.56 0V1282M1374.84 0V1282M1387.13 0V1282M1399.41 0V1282M1423.98 0V1282M1436.26 0V1282M1448.55 0V1282M1460.83 0V1282M1473.12 0V1282M1485.40 0V1282M1497.69 0V1282M1509.97 0V1282M1522.26 0V1282M1546.82 0V1282M1559.11 0V1282M1571.39 0V1282M1583.68 0V1282M1595.96 0V1282M1608.25 0V1282M1620.53 0V1282M1632.82 0V1282M1645.10 0V1282M1669.67 0V1282M1681.95 0V1282M1694.24 0V1282M1706.52 0V1282M1718.81 0V1282M1731.09 0V1282M1743.38 0V1282M1755.66 0V1282M1767.95 0V1282M1792.51 0V1282M1804.80 0V1282M1817.08 0V1282M1829.37 0V1282M1841.65 0V1282M1853.94 0V1282M1866.22 0V1282M1878.51 0V1282M1890.79 0V1282M1915.36 0V1282M1927.64 0V1282M1939.93 0V1282M1952.21 0V1282M1964.50 0V1282M1976.78 0V1282M1989.07 0V1282M2001.35 0V1282M2013.64 0V1282M2038.20 0V1282M2050.49 0V1282M2062.77 0V1282M2075.06 0V1282M2087.34 0V1282M2099.63 0V1282M2111.91 0V1282M2124.20 0V1282M2136.48 0V1282M2161.05 0V1282M2173.33 0V1282M2185.62 0V1282M2197.90 0V1282M2210.19 0V1282M2222.47 0V1282M2234.76 0V1282M2247.04 0V1282M2259.33 0V1282M2283.89 0V1282M2296.18 0V1282M2308.46 0V1282M2320.75 0V1282M2333.03 0V1282M2345.32 0V1282M2357.60 0V1282M2369.89 0V1282M2382.17 0V1282M2406.74 0V1282M2419.02 0V1282M2431.31 0V1282M2443.59 0V1282M2455.88 0V1282M2468.16 0V1282M2480.45 0V1282M2492.73 0V1282M2505.02 0V1282M2529.58 0V1282M2541.87 0V1282M2554.15 0V1282M0 -0.44H2560M0 11.85H2560M0 24.13H2560M0 36.42H2560M0 60.98H2560M0 73.27H2560M0 85.55H2560M0 97.84H2560M0 110.12H2560M0 122.41H2560M0 134.69H2560M0 146.98H2560M0 159.26H2560M0 183.83H2560M0 196.11H2560M0 208.40H2560M0 220.68H2560M0 232.97H2560M0 245.25H2560M0 257.54H2560M0 269.82H2560M0 282.11H2560M0 306.67H2560M0 318.96H2560M0 331.24H2560M0 343.53H2560M0 355.81H2560M0 368.10H2560M0 380.38H2560M0 392.67H2560M0 404.95H2560M0 429.52H2560M0 441.80H2560M0 454.09H2560M0 466.37H2560M0 478.66H2560M0 490.94H2560M0 503.23H2560M0 515.51H2560M0 527.80H2560M0 552.36H2560M0 564.65H2560M0 576.93H2560M0 589.22H2560M0 601.50H2560M0 613.79H2560M0 626.07H2560M0 638.36H2560M0 650.64H2560M0 675.21H2560M0 687.49H2560M0 699.78H2560M0 712.06H2560M0 724.35H2560M0 736.63H2560M0 748.92H2560M0 761.20H2560M0 773.49H2560M0 798.05H2560M0 810.34H2560M0 822.62H2560M0 834.91H2560M0 847.19H2560M0 859.48H2560M0 871.76H2560M0 884.05H2560M0 896.33H2560M0 920.90H2560M0 933.18H2560M0 945.47H2560M0 957.75H2560M0 970.04H2560M0 982.32H2560M0 994.61H2560M0 1006.89H2560M0 1019.18H2560M0 1043.74H2560M0 1056.03H2560M0 1068.31H2560M0 1080.60H2560M0 1092.88H2560M0 1105.17H2560M0 1117.45H2560M0 1129.74H2560M0 1142.02H2560M0 1166.59H2560M0 1178.87H2560M0 1191.16H2560M0 1203.44H2560M0 1215.73H2560M0 1228.01H2560M0 1240.30H2560M0 1252.58H2560M0 1264.87H2560" stroke="#1c1c1c" stroke-width="1"/><path d="M60.40 0V1282M183.25 0V1282M306.09 0V1282M428.93 0V1282M551.78 0V1282M674.62 0V1282M797.47 0V1282M920.31 0V1282M1043.16 0V1282M1166.01 0V1282M1288.85 0V1282M1411.69 0V1282M1534.54 0V1282M1657.38 0V1282M1780.23 0V1282M1903.08 0V1282M2025.92 0V1282M2148.76 0V1282M2271.61 0V1282M2394.45 0V1282M2517.30 0V1282M0 48.70H2560M0 171.54H2560M0 294.39H2560M0 417.23H2560M0 540.08H2560M0 662.92H2560M0 785.77H2560M0 908.62H2560M0 1031.46H2560M0 1154.31H2560M0 1277.15H2560" stroke="#1a1a1a" stroke-width="2"/></svg>
<div class="node" style="left:553.1px;top:567px;width:387.8px;height:363.9px;background:#553333;box-shadow:2.5px 2.5px 4px rgba(0,0,0,0.5);"></div>
<div class="node" style="left:553.1px;top:567px;width:387.8px;height:37.4px;background:#332222;border-radius:10px 10px 0 0"></div>
<svg class="abs" style="left:566.4px;top:581px" width="10" height="10" viewBox="0 0 10 10"><rect x="0.0" y="0.0" width="2.6" height="2.6" fill="#777"/><rect x="0.0" y="3.7" width="2.6" height="2.6" fill="#777"/><rect x="0.0" y="7.4" width="2.6" height="2.6" fill="#777"/><rect x="3.7" y="0.0" width="2.6" height="2.6" fill="#777"/><rect x="3.7" y="3.7" width="2.6" height="2.6" fill="#777"/><rect x="3.7" y="7.4" width="2.6" height="2.6" fill="#777"/><rect x="7.4" y="0.0" width="2.6" height="2.6" fill="#777"/><rect x="7.4" y="3.7" width="2.6" height="2.6" fill="#777"/><rect x="7.4" y="7.4" width="2.6" height="2.6" fill="#777"/></svg>
<div class="abs" style="left:590.4px;top:577.0px;line-height:20px;font-size:17px;color:#999;white-space:nowrap">loader</div>
<div class="abs" style="left:922.8px;top:615.1px;width:11.2px;height:11.2px;border-radius:50%;background:#ff6e6e;border:1.5px solid #111"></div>
<div class="abs" style="right:1643.6px;top:612.2px;line-height:20px;font-size:14.7px;color:#aaa;white-space:nowrap;text-align:right">VAE</div>
<div class="abs" style="left:922.8px;top:639.7px;width:11.2px;height:11.2px;border-radius:50%;background:#ffd500;border:1.5px solid #111"></div>
<div class="abs" style="right:1643.6px;top:636.8px;line-height:20px;font-size:14.7px;color:#aaa;white-space:nowrap;text-align:right">CLIP</div>
<div class="abs" style="left:922.8px;top:664.3px;width:11.2px;height:11.2px;border-radius:50%;background:#b39ddb;border:1.5px solid #111"></div>
<div class="abs" style="right:1643.6px;top:661.4px;line-height:20px;font-size:14.7px;color:#aaa;white-space:nowrap;text-align:right">MODEL</div>
<div class="w" style="left:571.1px;top:684.4px;width:350.8px"><div class="tri tl"></div><div class="tri tr"></div><div class="wl" style="left:24px">unet_name</div><div class="wv" style="right:42px">flux1-dev-fp8.safetensors</div></div>
<div class="w" style="left:571.1px;top:714.0px;width:350.8px"><div class="tri tl"></div><div class="tri tr"></div><div class="wl" style="left:24px">weight_dtype</div><div class="wv" style="right:42px">fp8_e4m3fn</div></div>
<div class="w" style="left:571.1px;top:743.5px;width:350.8px"><div class="tri tl"></div><div class="tri tr"></div><div class="wl" style="left:24px">vae_name</div><div class="wv" style="right:42px">ae.sft</div></div>
<div class="w" style="left:571.1px;top:773.1px;width:350.8px"><div class="tri tl"></div><div class="tri tr"></div><div class="wl" style="left:24px">clip_name1</div><div class="wv" style="right:42px">t5xxl_fp8_e4m3fn.safetensors</div></div>
<div class="w" style="left:571.1px;top:802.6px;width:350.8px"><div class="tri tl"></div><div class="tri tr"></div><div class="wl" style="left:24px">clip_name2</div><div class="wv" style="right:42px">clip_l.safetensors</div></div>
<div class="w" style="left:571.1px;top:832.2px;width:350.8px"><div class="tri tl"></div><div class="tri tr"></div><div class="wl" style="left:24px">type</div><div class="wv" style="right:42px">flux</div></div>
<div class="w" style="left:571.1px;top:861.8px;width:350.8px"><div class="tri tl"></div><div class="tri tr"></div><div class="wl" style="left:24px">lora_name</div><div class="wv" style="right:42px">2000-ost.safetensors</div></div>
<div class="w" style="left:571.1px;top:891.3px;width:350.8px"><div class="tri tl"></div><div class="tri tr"></div><div class="wl" style="left:24px">strength_model</div><div class="wv" style="right:42px">1.00</div></div>
<div class="node" style="left:941.3px;top:567.1px;width:485.8px;height:366.7px;background:#665533;box-shadow:2.5px 2.5px 4px rgba(0,0,0,0.5);"></div>
<div class="node" style="left:941.3px;top:567.1px;width:485.8px;height:37.0px;background:#443322;border-radius:10px 10px 0 0"></div>
<svg class="abs" style="left:954.8px;top:581px" width="10" height="10" viewBox="0 0 10 10"><rect x="0.0" y="0.0" width="2.6" height="2.6" fill="#777"/><rect x="0.0" y="3.7" width="2.6" height="2.6" fill="#777"/><rect x="0.0" y="7.4" width="2.6" height="2.6" fill="#777"/><rect x="3.7" y="0.0" width="2.6" height="2.6" fill="#777"/><rect x="3.7" y="3.7" width="2.6" height="2.6" fill="#777"/><rect x="3.7" y="7.4" width="2.6" height="2.6" fill="#777"/><rect x="7.4" y="0.0" width="2.6" height="2.6" fill="#777"/><rect x="7.4" y="3.7" width="2.6" height="2.6" fill="#777"/><rect x="7.4" y="7.4" width="2.6" height="2.6" fill="#777"/></svg>
<div class="abs" style="left:978.4px;top:576.7px;line-height:20px;font-size:17px;color:#999;white-space:nowrap">input</div>
<div class="abs" style="left:948.3px;top:617.0px;width:10.4px;height:10.4px;border-radius:50%;background:#ffd500"></div>
<div class="abs" style="left:965.9px;top:613.7px;line-height:20px;font-size:14.7px;color:#aaa;white-space:nowrap">clip</div>
<div class="abs" style="left:1408.8px;top:616.6px;width:11.2px;height:11.2px;border-radius:50%;background:#ff9cf9;border:1.5px solid #111"></div>
<div class="abs" style="right:1157.7px;top:613.7px;line-height:20px;font-size:14.7px;color:#aaa;white-space:nowrap;text-align:right">LATENT</div>
<div class="abs" style="left:1408.8px;top:640.8px;width:11.2px;height:11.2px;border-radius:50%;background:#ffa931;border:1.5px solid #111"></div>
<div class="abs" style="right:1157.7px;top:637.9px;line-height:20px;font-size:14.7px;color:#aaa;white-space:nowrap;text-align:right">CONDITIONING</div>
<div class="w" style="left:958.9px;top:659.8px;width:448.2px"><div class="tri tl"></div><div class="tri tr"></div><div class="wl" style="left:24px">width</div><div class="wv" style="right:42px">1024</div></div>
<div class="w" style="left:958.9px;top:689.4px;width:448.2px"><div class="tri tl"></div><div class="tri tr"></div><div class="wl" style="left:24px">height</div><div class="wv" style="right:42px">1024</div></div>
<div class="w" style="left:958.9px;top:719.0px;width:448.2px"><div class="tri tl"></div><div class="tri tr"></div><div class="wl" style="left:24px">batch_size</div><div class="wv" style="right:42px">1</div></div>
<div class="abs" style="left:954.9px;top:763.9px;width:460.1px;height:129.9px;background:#222;overflow:hidden"><div style="position:absolute;left:3px;top:1.5px;font-family:'Liberation Mono',monospace;font-size:12.3px;line-height:15.04px;color:#e0e0e0;white-space:pre;-webkit-text-stroke:0.15px #ddd;transform:scaleY(1.06);transform-origin:0 0">towards the camera, captured in sharp detail as they break
through the air. The beach itself is rugged, with waves
crashing against the shore and the sand being disturbed by
the force of the explosion. Palm trees in the distance sway
violently from the blast, some of their fronds torn off and
scattered. The scene is filled with tension and romance,
blending the serenity of the kiss with the chaos of the
explosion, creating a dramatic and dynamic atmosphere.</div></div>
<div class="w" style="left:958.9px;top:903.6px;width:448.2px"><div class="tri tl"></div><div class="tri tr"></div><div class="wl" style="left:24px">guidance</div><div class="wv" style="right:42px">0.0</div></div>
<div class="node" style="left:1427.3px;top:568.1px;width:387.3px;height:619.1px;background:#335533;box-shadow:2.5px 2.5px 4px rgba(0,0,0,0.5);"></div>
<div class="node" style="left:1427.3px;top:568.1px;width:387.3px;height:37.5px;background:#223322;border-radius:10px 10px 0 0"></div>
<div class="abs" style="left:1439.2px;top:581.2px;width:12px;height:12px;border-radius:50%;background:#686868"></div>
<div class="abs" style="left:1464px;top:577.6px;line-height:20px;font-size:17px;color:#999;white-space:nowrap">KSampler</div>
<div class="abs" style="left:1433.7px;top:617.6px;width:10.4px;height:10.4px;border-radius:50%;background:#b39ddb"></div>
<div class="abs" style="left:1451.3px;top:614.3px;line-height:20px;font-size:14.7px;color:#aaa;white-space:nowrap">model</div>
<div class="abs" style="left:1433.7px;top:642.3px;width:10.4px;height:10.4px;border-radius:50%;background:#ffa931"></div>
<div class="abs" style="left:1451.3px;top:639.0px;line-height:20px;font-size:14.7px;color:#aaa;white-space:nowrap">positive</div>
<div class="abs" style="left:1433.7px;top:667.0px;width:10.4px;height:10.4px;border-radius:50%;background:#ffa931"></div>
<div class="abs" style="left:1451.3px;top:663.7px;line-height:20px;font-size:14.7px;color:#aaa;white-space:nowrap">negative</div>
<div class="abs" style="left:1433.7px;top:691.7px;width:10.4px;height:10.4px;border-radius:50%;background:#ff9cf9"></div>
<div class="abs" style="left:1451.3px;top:688.4px;line-height:20px;font-size:14.7px;color:#aaa;white-space:nowrap">latent_image</div>
<div class="abs" style="left:1796.4px;top:616.7px;width:11.2px;height:11.2px;border-radius:50%;background:#ff9cf9;border:1.5px solid #111"></div>
<div class="abs" style="right:770.0px;top:613.8px;line-height:20px;font-size:14.7px;color:#aaa;white-space:nowrap;text-align:right">LATENT</div>
<div class="w" style="left:1444.3px;top:710.5px;width:350.1px"><div class="tri tl"></div><div class="tri tr"></div><div class="wl" style="left:24px">seed</div><div class="wv" style="right:42px">17574565067821</div></div>
<div class="w" style="left:1444.3px;top:740.1px;width:350.1px"><div class="tri tl"></div><div class="tri tr"></div><div class="wl" style="left:24px">control_after_generate</div><div class="wv" style="right:42px">randomize</div></div>
<div class="w" style="left:1444.3px;top:769.7px;width:350.1px"><div class="tri tl"></div><div class="tri tr"></div><div class="wl" style="left:24px">steps</div><div class="wv" style="right:42px">20</div></div>
<div class="w" style="left:1444.3px;top:799.3px;width:350.1px"><div class="tri tl"></div><div class="tri tr"></div><div class="wl" style="left:24px">cfg</div><div class="wv" style="right:42px">8.0</div></div>
<div class="w" style="left:1444.3px;top:828.9px;width:350.1px"><div class="tri tl"></div><div class="tri tr"></div><div class="wl" style="left:24px">sampler_name</div><div class="wv" style="right:42px">euler</div></div>
<div class="w" style="left:1444.3px;top:858.5px;width:350.1px"><div class="tri tl"></div><div class="tri tr"></div><div class="wl" style="left:24px">scheduler</div><div class="wv" style="right:42px">beta</div></div>
<div class="w" style="left:1444.3px;top:888.1px;width:350.1px"><div class="tri tl"></div><div class="tri tr"></div><div class="wl" style="left:24px">denoise</div><div class="wv" style="right:42px">1.00</div></div>
<div class="abs" style="left:1806px;top:561.8px;width:443.6px;height:407.9px;border:2.1px solid #b8b8b8;border-radius:20px"></div>
<div class="node" style="left:1814.7px;top:569.4px;width:427.5px;height:393.4px;background:#333355;box-shadow:2.5px 2.5px 4px rgba(0,0,0,0.5);"></div>
<div class="node" style="left:1814.7px;top:569.4px;width:427.5px;height:38.1px;background:#222233;border-radius:10px 10px 0 0"></div>
<svg class="abs" style="left:1828px;top:583.2px" width="10" height="10" viewBox="0 0 10 10"><rect x="0.0" y="0.0" width="2.6" height="2.6" fill="#777"/><rect x="0.0" y="3.7" width="2.6" height="2.6" fill="#777"/><rect x="0.0" y="7.4" width="2.6" height="2.6" fill="#777"/><rect x="3.7" y="0.0" width="2.6" height="2.6" fill="#777"/><rect x="3.7" y="3.7" width="2.6" height="2.6" fill="#777"/><rect x="3.7" y="7.4" width="2.6" height="2.6" fill="#777"/><rect x="7.4" y="0.0" width="2.6" height="2.6" fill="#777"/><rect x="7.4" y="3.7" width="2.6" height="2.6" fill="#777"/><rect x="7.4" y="7.4" width="2.6" height="2.6" fill="#777"/></svg>
<div class="abs" style="left:1852.1px;top:578.4px;line-height:20px;font-size:17px;color:#fff;white-space:nowrap">output</div>
<div class="abs" style="left:1821.8px;top:619.0px;width:10.4px;height:10.4px;border-radius:50%;background:#ff9cf9"></div>
<div class="abs" style="left:1839.0px;top:615.7px;line-height:20px;font-size:14.7px;color:#aaa;white-space:nowrap">samples</div>
<div class="abs" style="left:1821.8px;top:643.2px;width:10.4px;height:10.4px;border-radius:50%;background:#ff6e6e"></div>
<div class="abs" style="left:1839.0px;top:639.9px;line-height:20px;font-size:14.7px;color:#aaa;white-space:nowrap">vae</div>
<div class="w" style="left:1832.3px;top:662.0px;width:390.0px"><div class="wl" style="left:19px">filename_prefix</div><div class="wv" style="right:18px">ComfyUI</div></div>
<svg class="abs" style="left:1893px;top:693px" width="270" height="270" viewBox="0 0 270 270">
<defs>
<linearGradient id="isky" x1="0" y1="0" x2="0" y2="1">
 <stop offset="0" stop-color="#5e87a0"/><stop offset="0.22" stop-color="#7293a8"/><stop offset="0.36" stop-color="#8ea4b2"/><stop offset="0.45" stop-color="#98a4ae"/><stop offset="0.5" stop-color="#a4a4aa"/>
</linearGradient>
<linearGradient id="isand" x1="0" y1="0" x2="0.2" y2="1">
 <stop offset="0" stop-color="#a87c68"/><stop offset="0.45" stop-color="#8a6656"/><stop offset="1" stop-color="#5e4a42"/>
</linearGradient>
<linearGradient id="isea" x1="0" y1="0" x2="0" y2="1">
 <stop offset="0" stop-color="#5c6a7a"/><stop offset="0.6" stop-color="#7a8694"/><stop offset="1" stop-color="#a8a8b0"/>
</linearGradient>
<linearGradient id="irock" x1="0" y1="0" x2="0" y2="1">
 <stop offset="0" stop-color="#7a4a30"/><stop offset="0.18" stop-color="#4e3a30"/><stop offset="0.55" stop-color="#3a322e"/><stop offset="1" stop-color="#2c2826"/>
</linearGradient>
<filter id="b10" x="-50%" y="-50%" width="200%" height="200%"><feGaussianBlur stdDeviation="10"/></filter>
<filter id="b6" x="-50%" y="-50%" width="200%" height="200%"><feGaussianBlur stdDeviation="6"/></filter>
<filter id="b3" x="-50%" y="-50%" width="200%" height="200%"><feGaussianBlur stdDeviation="3"/></filter>
<filter id="b1" x="-20%" y="-20%" width="140%" height="140%"><feGaussianBlur stdDeviation="0.8"/></filter>
<clipPath id="iclip"><rect width="270" height="270"/></clipPath>
</defs>
<g clip-path="url(#iclip)">
<rect width="270" height="270" fill="url(#isky)"/>
<ellipse cx="35" cy="118" rx="75" ry="16" fill="#5e6878" opacity="0.75" filter="url(#b6)"/>
<ellipse cx="182" cy="35" rx="38" ry="50" fill="#8a6658" filter="url(#b10)"/>
<ellipse cx="175" cy="80" rx="45" ry="40" fill="#c87a58" filter="url(#b10)"/>
<ellipse cx="175" cy="110" rx="55" ry="42" fill="#ec8c48" filter="url(#b10)"/>
<ellipse cx="128" cy="100" rx="26" ry="30" fill="#f09a60" filter="url(#b10)"/>
<ellipse cx="126" cy="62" rx="16" ry="22" fill="#eea078" opacity="0.9" filter="url(#b6)"/>
<ellipse cx="215" cy="110" rx="25" ry="35" fill="#b86a48" filter="url(#b10)"/>
<ellipse cx="185" cy="105" rx="20" ry="34" fill="#ffd07a" filter="url(#b6)"/>
<ellipse cx="142" cy="118" rx="13" ry="15" fill="#ffe6a8" filter="url(#b6)"/>
<ellipse cx="195" cy="135" rx="14" ry="12" fill="#ffb868" filter="url(#b6)"/>
<path d="M222 100 Q240 90 270 92 L270 145 L212 145Z" fill="#5a3a26" opacity="0.9" filter="url(#b6)"/>
<g stroke="#4a2e1e" stroke-linecap="round" fill="none" filter="url(#b1)">
 <path stroke-width="4" d="M236 62 Q226 50 218 56 M236 62 Q222 60 214 72 M236 62 Q230 72 226 86 M236 62 Q244 48 256 50 M236 62 Q250 64 256 76 M236 62 Q244 74 246 88 M236 62 Q236 48 230 42"/>
 <path stroke-width="2.5" d="M236 62 Q240 90 246 140"/>
 <path stroke-width="4" d="M262 38 Q250 26 242 32 M262 38 Q248 40 244 52 M262 38 Q258 24 264 18 M262 38 Q272 30 276 34 M262 38 Q256 50 252 62 M262 38 Q272 48 272 60"/>
 <path stroke-width="2.5" d="M262 38 Q264 80 268 140"/>
</g>
<path d="M0 135 L120 135 L116 163 Q60 180 0 204Z" fill="url(#isea)"/>
<path d="M0 152 Q60 146 118 148 L118 151 Q60 151 0 157Z" fill="#c8b8b8" opacity="0.4" filter="url(#b1)"/>
<path d="M0 170 Q60 160 118 154 L118 159 Q60 166 0 176Z" fill="#e0c8c0" opacity="0.55" filter="url(#b1)"/>
<path d="M18 138 Q40 128 60 132 Q80 134 100 138Z" fill="#3e2c26" filter="url(#b1)"/>
<circle cx="73" cy="134" r="2.6" fill="#fff0c0" filter="url(#b1)"/>
<circle cx="53" cy="132" r="1.6" fill="#ffe0a0"/>
<path d="M0 204 Q60 178 118 162 L122 270 L0 270Z" fill="url(#isand)"/>
<path d="M188 142 Q230 135 270 137 L270 270 L188 270Z" fill="url(#irock)"/>
<g fill="#5a5250" opacity="0.45" filter="url(#b1)">
 <ellipse cx="205" cy="185" rx="8" ry="3"/><ellipse cx="240" cy="172" rx="10" ry="4"/><ellipse cx="258" cy="200" rx="8" ry="3"/><ellipse cx="225" cy="215" rx="12" ry="5"/><ellipse cx="250" cy="250" rx="10" ry="4"/></g>
<g fill="#2e2622" opacity="0.6" filter="url(#b1)">
 <ellipse cx="90" cy="225" rx="12" ry="4"/><ellipse cx="60" cy="250" rx="10" ry="4"/><ellipse cx="40" cy="213" rx="6" ry="2"/>
</g>
<g fill="#141417">
 <path d="M123 72 Q104 72 98 92 Q92 112 96 130 L104 138 L106 168 Q100 185 101 200 Q104 212 108 222 L106 270 L140 270 L142 120 L134 104 L137 88 Q132 74 123 72Z"/>
 <path d="M153 57 L158 70 Q166 72 170 80 Q172 92 170 100 Q180 106 186 112 Q189 124 189 140 L200 270 L138 270 L140 150 Q136 130 140 118 Q142 108 146 104 L139 100 L137 92 L141 85 Q142 72 150 68Z"/>
</g>
<path d="M97 95 Q92 115 100 135 L106 125 Q100 110 104 92Z" fill="#5a3a28" opacity="0.7" filter="url(#b1)"/>
<path d="M112 118 Q124 114 130 128 L128 160 Q116 152 112 118Z" fill="#4e3428" opacity="0.8" filter="url(#b1)"/>
<path d="M146 122 Q170 114 182 128 L181 165 Q160 170 146 152Z" fill="#202024" opacity="0.9" filter="url(#b1)"/>
<rect x="136" y="168" width="21" height="11" fill="#5a5024" opacity="0.85"/>
<g fill="#222">
 <ellipse cx="13" cy="25" rx="3" ry="2.5"/><ellipse cx="66" cy="47" rx="2.5" ry="3"/><circle cx="90" cy="11" r="1.4"/><circle cx="95" cy="33" r="1.1"/><circle cx="70" cy="60" r="1"/>
</g>
<g fill="#d8a888" opacity="0.75">
 <circle cx="80" cy="30" r="0.9"/><circle cx="105" cy="50" r="0.9"/><circle cx="100" cy="65" r="0.9"/><circle cx="85" cy="75" r="0.9"/><circle cx="110" cy="40" r="0.9"/><circle cx="92" cy="90" r="0.9"/><circle cx="75" cy="22" r="0.9"/><circle cx="96" cy="20" r="0.8"/><circle cx="88" cy="45" r="0.8"/><circle cx="76" cy="60" r="0.8"/><circle cx="92" cy="110" r="0.9"/><circle cx="82" cy="98" r="0.8"/><circle cx="70" cy="80" r="0.8"/><circle cx="65" cy="74" r="0.9"/><circle cx="102" cy="28" r="0.8"/><circle cx="113" cy="22" r="0.8"/><circle cx="118" cy="48" r="0.9"/><circle cx="97" cy="125" r="0.9"/>
</g>
</g>
</svg>
<div class="stat" style="top:1322.8px">T: 0.00s</div>
<div class="stat" style="top:1335.8px">I: 0</div>
<div class="stat" style="top:1348.7px">N: 4 [4]</div>
<div class="stat" style="top:1361.7px">V: 195</div>
<div class="stat" style="top:1374.6px">FPS:166.67</div>
<div class="abs" style="left:2370px;top:759px;width:190px;height:625.7px;background:#353535;border-radius:0 8px 8px 8px"></div>
<div class="abs" style="left:2381.5px;top:771px;width:4px;height:15px;background:radial-gradient(circle,#ddd 0.9px,transparent 1.1px) 0 0/4px 5px"></div>
<div class="abs" style="left:2404px;top:767.0px;line-height:21.2px;font-size:16.3px;color:#999;white-space:nowrap;">Queue size: 0</div>
<svg class="abs" style="left:2521px;top:771px" width="14" height="14" viewBox="0 0 14 14"><g fill="none" stroke="#6c8494" stroke-width="1.8"><circle cx="7" cy="7" r="3.3"/><path d="M7 0.8V3M7 11V13.2M0.8 7H3M11 7H13.2M2.6 2.6L4.2 4.2M9.8 9.8L11.4 11.4M2.6 11.4L4.2 9.8M9.8 4.2L11.4 2.6"/></g></svg>
<svg class="abs" style="left:2538.5px;top:773px" width="10.5" height="10.5" viewBox="0 0 10.5 10.5"><path d="M1 1L9.5 9.5M9.5 1L1 9.5" stroke="#e8e8e8" stroke-width="1.8"/></svg>
<div class="abs" style="left:2380.7px;top:795.7px;width:168.8px;height:27.7px;background:#222;border:2px solid #4a4a4a;border-radius:8px"></div>
<div class="abs" style="left:2365px;width:200px;text-align:center;top:796.5px;line-height:26.8px;font-size:20.6px;color:#ddd;white-space:nowrap;">Queue Prompt</div>
<div class="abs" style="left:2390px;top:834px;width:149.6px;height:17.8px;background:#222"></div>
<div class="abs" style="left:2390px;top:834px;width:149.6px;height:17.8px;line-height:17.8px;text-align:center;font-size:14.5px;letter-spacing:0.75px;color:#ddd">00:02:07</div>
<div class="bar" style="top:861.9px"><div class="fill" style="width:6.8px;background:#18a01c"></div><div class="bt">6%</div></div>
<div class="rl" style="top:861.9px">CPU</div>
<div class="bar" style="top:875.9px"><div class="fill" style="width:89.8px;background:#0a6618"></div><div class="bt">78%</div></div>
<div class="rl" style="top:875.9px">RAM</div>
<div class="bar" style="top:889.9px"><div class="fill" style="width:13.9px;background:#1a8cf8"></div><div class="bt">15%</div></div>
<div class="rl" style="top:889.9px">GPU</div>
<div class="bar" style="top:904.0px"><div class="fill" style="width:72.8px;background:#1c6ed0"></div><div class="bt">63%</div></div>
<div class="rl" style="top:904.0px">VRAM</div>
<div class="bar" style="top:918.0px"><div class="fill" style="width:47.8px;background:#6a9200"></div><div class="bt">41°</div></div>
<div class="rl" style="top:918.0px">Temp</div>
<div class="bar" style="top:932.0px"><div class="fill" style="width:112.9px;background:#780f98"></div><div class="bt">98%</div></div>
<div class="rl" style="top:932.0px">HDD</div>
<div class="abs" style="left:2397px;top:956.2px;width:135.6px;height:21.4px;background:#2a2838;border:1.5px solid #9a98ae;border-radius:2px"></div>
<div class="abs" style="left:2402px;top:958.5px;line-height:18.2px;font-size:14px;color:#eee;white-space:nowrap;">workflow</div>
<div class="abs" style="left:2405px;top:982.8px;line-height:21.8px;font-size:16.8px;color:#999;white-space:nowrap;">Extra options</div>
<div class="abs" style="left:2508px;top:986.5px;width:14px;height:14px;border:2px solid #a4a2b8;border-radius:2px;background:#2a2838"></div>
<div class="sbtn" style="left:2380.8px;top:1006.6px;width:83.2px">Queue Front</div>
<div class="sbtn" style="left:2466px;top:1006.6px;width:83.7px">View Queue</div>
<div class="sbtn" style="left:2423.7px;top:1027px;width:83.8px">View History</div>
<div class="abs" style="left:2380.6px;top:1056.7px;width:168.9px;height:27.5px;background:#222;border:2px solid #4a4a4a;border-radius:8px"></div>
<div class="abs" style="left:2365px;width:200px;text-align:center;top:1059.3px;line-height:25.4px;font-size:19.5px;color:#ddd;white-space:nowrap;">Save</div>
<div class="abs" style="left:2380.6px;top:1087.6px;width:168.9px;height:27.5px;background:#222;border:2px solid #4a4a4a;border-radius:8px"></div>
<div class="abs" style="left:2365px;width:200px;text-align:center;top:1090.2px;line-height:25.4px;font-size:19.5px;color:#ddd;white-space:nowrap;">Load</div>
<div class="abs" style="left:2380.6px;top:1118.5px;width:168.9px;height:27.5px;background:#222;border:2px solid #4a4a4a;border-radius:8px"></div>
<div class="abs" style="left:2365px;width:200px;text-align:center;top:1121.1px;line-height:25.4px;font-size:19.5px;color:#ddd;white-space:nowrap;">Refresh</div>
<div class="abs" style="left:2380.6px;top:1149.4px;width:168.9px;height:27.5px;background:#222;border:2px solid #4a4a4a;border-radius:8px"></div>
<div class="abs" style="left:2365px;width:200px;text-align:center;top:1152.0px;line-height:25.4px;font-size:19.5px;color:#ddd;white-space:nowrap;">Clipspace</div>
<div class="abs" style="left:2380.6px;top:1180.3px;width:168.9px;height:27.5px;background:#222;border:2px solid #4a4a4a;border-radius:8px"></div>
<div class="abs" style="left:2365px;width:200px;text-align:center;top:1182.9px;line-height:25.4px;font-size:19.5px;color:#ddd;white-space:nowrap;">Clear</div>
<div class="abs" style="left:2380.6px;top:1211.2px;width:168.9px;height:27.5px;background:#222;border:2px solid #4a4a4a;border-radius:8px"></div>
<div class="abs" style="left:2365px;width:200px;text-align:center;top:1213.8px;line-height:25.4px;font-size:19.5px;color:#ddd;white-space:nowrap;">Load Default</div>
<div class="abs" style="left:2380.6px;top:1242.1px;width:168.9px;height:27.5px;background:#222;border:2px solid #4a4a4a;border-radius:8px"></div>
<div class="abs" style="left:2365px;width:200px;text-align:center;top:1244.7px;line-height:25.4px;font-size:19.5px;color:#ddd;white-space:nowrap;">Reset View</div>
<div class="abs" style="left:2380.6px;top:1291.3px;width:168.9px;height:1.5px;background:#8a8a8a"></div>
<div class="abs" style="left:2380.6px;top:1315.1px;width:168.9px;height:27.8px;background:#222;border:2px solid #4a4a4a;border-radius:8px"></div>
<div class="abs" style="left:2365px;width:200px;text-align:center;top:1317.7px;line-height:25.4px;font-size:19.5px;color:#ddd;white-space:nowrap;">Manager</div>
<div class="abs" style="left:2380.7px;top:1346.4px;width:168.8px;height:28.1px;background:linear-gradient(90deg,#00c6ff,#40e0d8 45%,#8cff9a);border:2px solid #4a4444;border-radius:8px"></div>
<div class="abs" style="left:2365px;width:200px;text-align:center;top:1349.0px;line-height:25.4px;font-size:19.5px;color:#000;white-space:nowrap;">Share</div>
</div></body></html>
